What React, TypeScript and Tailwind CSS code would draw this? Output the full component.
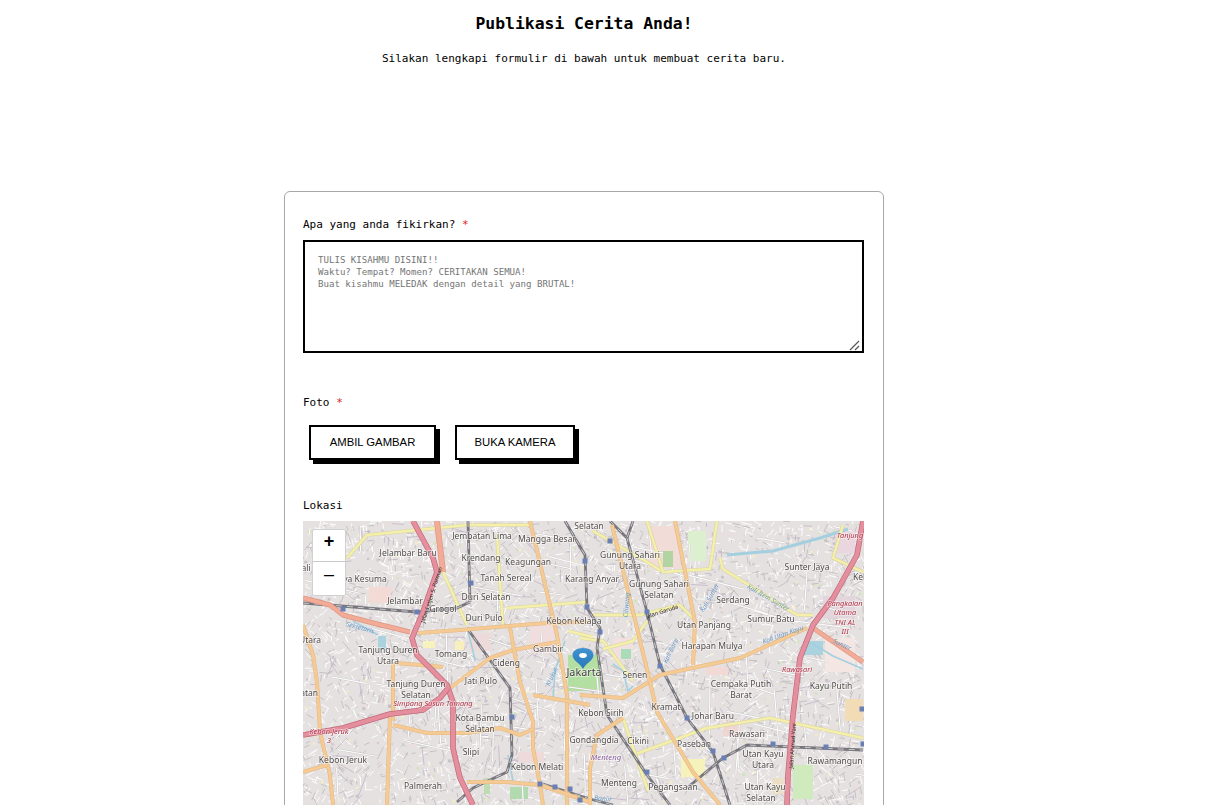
import React from "react";

type Pt = [number, number];
const path = (p: Pt[]) => {
  let d = `M${p[0][0]} ${p[0][1]}`;
  for (let i = 1; i < p.length; i++) d += ` L${p[i][0]} ${p[i][1]}`;
  return d;
};

const motorways: Pt[][] = [
  [[110,0],[130,37],[134,51],[120,91],[109,117],[114,134],[144,164],[150,181],[150,227],[157,257],[170,284]],
  [[0,214],[40,207],[87,193],[120,189],[137,177],[145,167]],
  [[560,0],[554,34],[530,77],[510,104],[497,137],[490,194],[485,254],[484,284]],
];
const trunks: Pt[][] = [
  [[134,0],[140,51]],
  [[0,77],[27,84],[40,94],[70,102],[107,111]],
  [[510,107],[560,141]],
];
const primaries: Pt[][] = [
  [[115,112],[157,109],[244,102],[287,101]],
  [[0,104],[10,134],[14,161],[17,211],[27,254],[30,284]],
  [[227,0],[254,114],[264,174],[264,284]],
  [[147,167],[187,137],[210,129],[254,121]],
  [[207,107],[217,161],[230,201],[230,227],[237,264],[240,284]],
  [[90,204],[124,212],[164,212],[197,207],[217,214],[230,208]],
  [[87,194],[84,284]],
  [[0,251],[24,244]],
  [[164,261],[204,261],[237,264],[287,281]],
  [[230,174],[287,184]],
  [[277,174],[320,177],[357,154],[394,146],[437,137],[504,107]],
  [[309,4],[347,161],[354,191],[390,251],[417,284]],
  [[372,0],[392,101],[390,144]],
  [[287,284],[287,247],[294,214],[320,197]],
  [[93,142],[140,146]],
  [[90,142],[90,200]],
];
const secondaries: Pt[][] = [
  [[44,37],[64,14],[164,4],[227,4]],
  [[140,51],[164,104]],
  [[194,14],[200,107]],
  [[204,87],[284,81]],
  [[290,10],[344,41],[360,51],[407,48],[414,0]],
  [[417,37],[420,48],[494,94],[510,94]],
  [[540,4],[530,37],[560,51]],
  [[290,94],[337,94],[377,84],[390,97]],
  [[277,117],[300,120],[330,160]],
  [[330,234],[404,207],[467,197],[560,217]],
  [[344,0],[360,51]],
  [[300,128],[330,120],[344,100]],
  [[320,197],[345,270]],
  [[265,110],[290,116]],
];
const rails: Pt[][] = [
  [[0,82],[114,91],[154,87],[167,81]],
  [[165,0],[167,81]],
  [[164,107],[207,167],[209,234],[204,251],[170,267],[154,281]],
  [[262,0],[282,34],[284,87],[297,107],[294,127],[304,194],[344,254],[367,284]],
  [[307,0],[324,17],[344,91],[357,144],[384,197],[410,231],[427,284]],
  [[330,0],[324,17]],
  [[384,267],[420,237],[444,224],[560,229]],
  [[240,263],[287,278],[310,284]],
];
const stations: Pt[] = [[40,88],[114,91],[168,62],[282,40],[284,86],[307,20],[297,111],[344,91],[357,145],[384,197],[410,230],[421,237],[470,223],[523,226],[560,223],[209,196],[237,263],[252,266],[267,268],[277,279],[344,251],[559,188]];
const streams: Pt[][] = [
  [[164,107],[170,130],[172,140]],
  [[424,34],[470,30],[517,17],[545,8]],
  [[50,100],[75,114]],
  [[250,178],[252,150],[262,120]],
  [[205,234],[210,260]],
  [[310,143],[320,150],[325,170],[330,165]],
  [[507,121],[530,135],[560,148]],
];

const areas: { x: number; y: number; w: number; h: number; c: string }[] = [
  { x: 265, y: 134, w: 32, h: 36, c: "#b4dfa2" },
  { x: 500, y: 120, w: 20, h: 14, c: "#aad3df" },
  { x: 75, y: 115, w: 8, h: 14, c: "#aad3df" },
  { x: 345, y: 5, w: 32, h: 42, c: "#f2dcd8" },
  { x: 360, y: 30, w: 10, h: 16, c: "#b2d4a0" },
  { x: 385, y: 10, w: 18, h: 30, c: "#dcefcf" },
  { x: 378, y: 238, w: 24, h: 18, c: "#f6f2bc" },
  { x: 207, y: 266, w: 18, h: 12, c: "#b1dbae" },
  { x: 181, y: 257, w: 6, h: 16, c: "#bddcb1" },
  { x: 490, y: 244, w: 20, h: 34, c: "#cfeabd" },
  { x: 542, y: 178, w: 18, h: 22, c: "#f2dcb6" },
  { x: 520, y: 75, w: 32, h: 22, c: "#e2d6dc" },
  { x: 522, y: 117, w: 30, h: 34, c: "#f3e6e3" },
  { x: 532, y: 8, w: 20, h: 24, c: "#ead6df" },
  { x: 66, y: 66, w: 22, h: 16, c: "#f3dad5" },
  { x: 166, y: 112, w: 22, h: 18, c: "#eddada" },
  { x: 227, y: 104, w: 24, h: 28, c: "#f0dede" },
  { x: 310, y: 117, w: 20, h: 22, c: "#f2dfdf" },
  { x: 318, y: 128, w: 10, h: 10, c: "#a9dcb9" },
  { x: 420, y: 201, w: 18, h: 14, c: "#efd6d3" },
  { x: 215, y: 231, w: 26, h: 10, c: "#eedada" },
  { x: 120, y: 120, w: 12, h: 7, c: "#f8f2bd" },
  { x: 152, y: 120, w: 9, h: 9, c: "#f7f0bc" },
  { x: 470, y: 257, w: 10, h: 16, c: "#ecdfc4" },
  { x: 403, y: 146, w: 22, h: 8, c: "#f1d9d6" },
];

// deterministic street texture: short streets whose direction changes per neighbourhood
function makeTexture() {
  let seed = 12345;
  const rnd = () => {
    seed = (seed * 16807) % 2147483647;
    return seed / 2147483647;
  };
  const cellAngle: number[] = [];
  for (let i = 0; i < 400; i++) cellAngle.push(rnd() * 1.57);
  const seg = (x: number, y: number, a: number, len: number) =>
    `M${x.toFixed(1)} ${y.toFixed(1)}l${(Math.cos(a) * len).toFixed(1)} ${(Math.sin(a) * len).toFixed(1)}`;
  const white: string[] = [];
  const grey: string[] = [];
  const lilac: string[] = [];
  const tertiary: string[] = [];
  const dots: { x: number; y: number; c: string; s: number }[] = [];
  for (let i = 0; i < 4200; i++) {
    const x = rnd() * 561;
    const y = rnd() * 290;
    const len = 2.5 + rnd() * 6;
    const base = cellAngle[Math.floor(x / 28) + 21 * Math.floor(y / 28)];
    const a = base + (rnd() < 0.5 ? 0 : 1.57) + (rnd() - 0.5) * 0.1;
    (i % 5 < 2 ? grey : white).push(seg(x, y, a, len));
  }
  for (let i = 0; i < 150; i++) {
    lilac.push(seg(rnd() * 561, rnd() * 290, rnd() * 6.28, 8 + rnd() * 16));
  }
  for (let i = 0; i < 70; i++) {
    const a = rnd() < 0.5 ? 0.12 + rnd() * 0.2 : 1.45 + rnd() * 0.2;
    tertiary.push(seg(rnd() * 561, rnd() * 290, a, 18 + rnd() * 40));
  }
  const cols = ["#d3cdd2", "#c8c3c8", "#f3ecc8", "#d2e3bd", "#f1dcdc"];
  for (let i = 0; i < 900; i++) {
    dots.push({ x: rnd() * 561, y: rnd() * 290, c: cols[Math.floor(rnd() * cols.length)], s: 1 + rnd() * 2 });
  }
  return { white: white.join(""), grey: grey.join(""), lilac: lilac.join(""), tertiary: tertiary.join(""), dots };
}
const tex = makeTexture();

type L = [string, number, number];
const labels: L[] = [
  ["Jembatan Lima",179,16],["Mangga Besar",244,19],["Jelambar Baru",105,33],["Krendang",178,38],["Keagungan",225,42],
  ["ya Kesuma",62,59],["Tanah Sereal",203,58],["Karang Anyar",289,59],["Duri Selatan",183,77],["Jelambar",102,81],["Grogol",140,89],
  ["Duri Pulo",181,98],["Kebon Kelapa",271,101],["Utara",7,120],["Tanjung Duren",85,130],["Utara",85,141],["Tomang",148,134],
  ["Gambir",245,129],["Cideng",203,143],["Jati Pulo",178,161],["Tanjung Duren",113,164],["Selatan",113,175],["latan",5,173],
  ["Kota Bambu",177,198],["Selatan",177,209],["Slipi",168,232],["Kebon Jeruk",40,240],["Kebon Melati",234,247],["Palmerah",120,266],
  ["Selatan",286,6],["Gunung Sahari",327,35],["Utara",327,46],["Gunung Sahari",356,64],["Selatan",356,75],["Sunter Jaya",504,47],
  ["Serdang",430,80],["Sumur Batu",468,99],["Utan Panjang",401,105],["Harapan Mulya",409,126],["Senen",332,155],
  ["Cempaka Putih",438,164],["Barat",438,175],["Kayu Putih",528,166],["Kramat",363,187],["Johar Baru",410,196],["Kebon Sirih",298,193],
  ["Rawasari",444,214],["Gondangdia",291,220],["Cikini",335,221],["Paseban",391,224],["Utan Kayu",460,234],["Utara",460,245],
  ["Rawamangun",532,241],["Menteng",316,263],["Pegangsaan",370,267],["Utan Kayu",462,267],["Selatan",458,278],["Kel",556,57],
  ["ali",3,48],
];
const redLabels: L[] = [
  ["Simpang Susun Tomang",130,183],["Kebon Jeruk",26,211],["3",26,220],["Rawasari",494,149],["Tanjung",547,15],
  ["Pangkalan",542,83],["Utama",542,92],["TNI AL",542,102],["III",542,111],
];
const blueLabels: [string, number, number, number][] = [
  ["Kali Item Sunter",465,77,30],["Kali Sunter",407,77,-60],["Kali Baru",368,130,-65],["Kali Utan Kayu",480,114,-20],
  ["Sekretaris",57,107,15],["Krukut",249,156,-65],["Ciliwung",324,84,-85],["Sunter",539,124,25],["Banjir",300,278,5],
];
const roadLabels: [string, number, number, number][] = [
  ["Jalan Garuda",359,91,-18],["Jalan Letjen S. Parman",129,74,-72],["Jalan Ahmad Yani",490,225,-86],
];

function MapArt() {
  const font = "'Noto Sans', 'Open Sans', sans-serif";
  return (
    <svg width="561" height="290" viewBox="0 0 561 290" className="block">
      <defs>
        <filter id="soft" x="0" y="0" width="100%" height="100%">
          <feGaussianBlur stdDeviation="0.5" />
        </filter>
        <filter id="softtext" x="-5%" y="-5%" width="110%" height="110%">
          <feGaussianBlur stdDeviation="0.3" />
        </filter>
      </defs>
      <g filter="url(#soft)">
        <rect width="561" height="290" fill="#e6e1e1" />
        {tex.dots.map((d, i) => (
          <rect key={i} x={d.x} y={d.y} width={d.s} height={d.s} fill={d.c} />
        ))}
        <path d={tex.white} stroke="#ffffff" strokeWidth="0.9" fill="none" />
        <path d={tex.grey} stroke="#bdb7bd" strokeWidth="0.8" fill="none" />
        <path d={tex.lilac} stroke="#c2b6c8" strokeWidth="0.8" fill="none" />
        {areas.map((a, i) => (
          <rect key={i} x={a.x} y={a.y} width={a.w} height={a.h} fill={a.c} />
        ))}
        <path d={tex.tertiary} stroke="#c9c5c5" strokeWidth="2" fill="none" />
        <path d={tex.tertiary} stroke="#fcfcfc" strokeWidth="1.2" fill="none" />
        {streams.map((p, i) => (
          <path key={i} d={path(p)} stroke="#a3cfdf" strokeWidth={i === 1 ? 3 : 1.6} fill="none" />
        ))}
        {secondaries.map((p, i) => (
          <g key={i} fill="none" strokeLinejoin="round">
            <path d={path(p)} stroke="#d9d4a2" strokeWidth="3.6" />
            <path d={path(p)} stroke="#f4f0ac" strokeWidth="2.4" />
          </g>
        ))}
        {rails.map((p, i) => (
          <g key={i} fill="none" strokeLinejoin="round">
            <path d={path(p)} stroke="#77767c" strokeWidth="2.8" />
            <path d={path(p)} stroke="#e0e0e0" strokeWidth="0.8" strokeDasharray="6 5" />
          </g>
        ))}
        {primaries.map((p, i) => (
          <g key={i} fill="none" strokeLinejoin="round">
            <path d={path(p)} stroke="#e0b985" strokeWidth="4" />
            <path d={path(p)} stroke="#f5ca94" strokeWidth="3" />
          </g>
        ))}
        {trunks.map((p, i) => (
          <g key={i} fill="none" strokeLinejoin="round">
            <path d={path(p)} stroke="#dd9682" strokeWidth={i === 0 ? 6 : 5} />
            <path d={path(p)} stroke="#f2ab96" strokeWidth={i === 0 ? 4.6 : 3.8} />
          </g>
        ))}
        {motorways.map((p, i) => (
          <g key={i} fill="none" strokeLinejoin="round">
            <path d={path(p)} stroke="#bf6a7a" strokeWidth="5.6" />
            <path d={path(p)} stroke="#e58f9e" strokeWidth="4.2" />
          </g>
        ))}
        {stations.map(([x, y], i) => (
          <rect key={i} x={x - 2.5} y={y - 2.5} width="5" height="5" fill="#6a7fb3" />
        ))}
      </g>
      <g filter="url(#softtext)" fontFamily={font}>
        <g fontSize="8.5" fill="#504c4a" textAnchor="middle" dominantBaseline="middle" stroke="#ffffff" strokeOpacity="0.6" strokeWidth="1.5" paintOrder="stroke">
          {labels.map(([t, x, y], i) => (
            <text key={i} x={x} y={y}>{t}</text>
          ))}
          <text x={281} y={152} fontSize="10.8" fill="#45413f">Jakarta</text>
          <text x={303} y={237} fontSize="7.8" fontStyle="italic" fill="#8a5f9c">Menteng</text>
        </g>
        <g fontSize="7.4" fontStyle="italic" fill="#b03045" textAnchor="middle" dominantBaseline="middle" stroke="#ffffff" strokeOpacity="0.5" strokeWidth="1.3" paintOrder="stroke">
          {redLabels.map(([t, x, y], i) => (
            <text key={i} x={x} y={y}>{t}</text>
          ))}
        </g>
        <g fontSize="6.6" fontStyle="italic" fill="#6a9cc9" textAnchor="middle" dominantBaseline="middle">
          {blueLabels.map(([t, x, y, r], i) => (
            <text key={i} x={x} y={y} transform={`rotate(${r} ${x} ${y})`}>{t}</text>
          ))}
        </g>
        <g fontSize="5.6" fill="#2f2a28" textAnchor="middle" dominantBaseline="middle">
          {roadLabels.map(([t, x, y, r], i) => (
            <text key={i} x={x} y={y} transform={`rotate(${r} ${x} ${y})`}>{t}</text>
          ))}
        </g>
      </g>
    </svg>
  );
}

function Marker() {
  return (
    <svg width="24" height="24" viewBox="0 0 24 24" className="absolute left-[268px] top-[126px]">
      <defs>
        <linearGradient id="pin" x1="0" y1="0" x2="0" y2="1">
          <stop offset="0" stopColor="#3f93d0" />
          <stop offset="1" stopColor="#2a76b8" />
        </linearGradient>
      </defs>
      <path d="M12 22 C9.5 16.5 1.5 13.5 1.5 8 C1.5 3.8 6 1 12 1 C18 1 22.5 3.8 22.5 8 C22.5 13.5 14.5 16.5 12 22 Z" fill="url(#pin)" />
      <ellipse cx="12" cy="8.5" rx="3.8" ry="2.4" fill="#ffffff" />
    </svg>
  );
}

const labelCls = "block text-[11px] leading-[16px] text-black";

export default function App() {
  return (
    <div className="h-[805px] overflow-hidden bg-white font-['DejaVu_Sans_Mono',monospace] text-black">
      <div className="w-[1168px]">
        <header className="pt-[14px] text-center">
          <h1 className="text-[16.4px] leading-[20px] font-bold">Publikasi Cerita Anda!</h1>
          <p className="mt-[17px] text-[11px] leading-[16px]">Silakan lengkapi formulir di bawah untuk membuat cerita baru.</p>
        </header>

        <main className="mx-auto mt-[124px] h-[800px] w-[600px] rounded-[6px] border border-[#a8a8a8] pl-[18px] pr-[19px] pt-[25px]">
          <label className={labelCls}>
            Apa yang anda fikirkan? <span className="text-[#e02020]">*</span>
          </label>
          <div className="relative mt-[7px] h-[113px] border-2 border-black pl-[13px] pt-[12px] text-[9.1px] leading-[12.2px] text-[#757575]">
            <div>TULIS KISAHMU DISINI!!</div>
            <div>Waktu? Tempat? Momen? CERITAKAN SEMUA!</div>
            <div>Buat kisahmu MELEDAK dengan detail yang BRUTAL!</div>
            <svg width="12" height="12" viewBox="0 0 12 12" className="absolute bottom-0 right-[1px]">
              <path d="M1 11 L10 2 M6 11 L10 7" stroke="#555" strokeWidth="1.2" fill="none" />
            </svg>
          </div>

          <label className={`${labelCls} mt-[42px]`}>
            Foto <span className="text-[#e02020]">*</span>
          </label>
          <div className="mt-[14px] flex gap-[19px] pl-[6px] font-['Liberation_Sans',Arial,sans-serif]">
            <button className="h-[35px] w-[127px] border-[2px] border-black bg-white text-center text-[11.3px] text-black shadow-[4px_4px_0_#000]">
              AMBIL GAMBAR
            </button>
            <button className="h-[35px] w-[120px] border-[2px] border-black bg-white text-center text-[11.3px] text-black shadow-[4px_4px_0_#000]">
              BUKA KAMERA
            </button>
          </div>

          <label className={`${labelCls} mt-[38px]`}>Lokasi</label>
          <div className="relative mt-[7px] h-[290px] w-[561px] overflow-hidden">
            <MapArt />
            <div className="absolute left-[9px] top-[8px] w-[34px] overflow-hidden rounded-[2px] border border-[#d0d0d0] bg-white font-['Liberation_Sans',Arial,sans-serif] text-black">
              <div className="flex h-[32px] items-center justify-center border-b border-[#c8c8c8] pb-[9px] text-[18px] font-bold leading-none">+</div>
              <div className="flex h-[33px] items-center justify-center pb-[9px] text-[18px] leading-none">–</div>
            </div>
            <Marker />
          </div>
        </main>
      </div>
    </div>
  );
}
